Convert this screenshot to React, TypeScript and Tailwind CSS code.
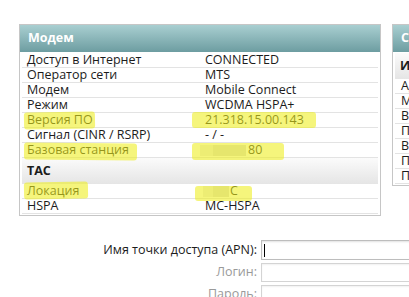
import React from 'react'

type Row = { label: string; value?: React.ReactNode }

const blurred = (a: number, b: number, shift: number) => (
  <span className="flex items-center" style={{ marginLeft: shift }}>
    <span className="h-[11px] bg-[#ececec]" style={{ width: a }} />
    <span className="h-[11px] bg-[#dcdcdc]" style={{ width: b }} />
  </span>
)

const modemTop: Row[] = [
  { label: 'Доступ в Интернет', value: 'CONNECTED' },
  { label: 'Оператор сети', value: 'MTS' },
  { label: 'Модем', value: 'Mobile Connect' },
  { label: 'Режим', value: 'WCDMA HSPA+' },
  { label: 'Версия ПО', value: '21.318.15.00.143' },
  { label: 'Сигнал (CINR / RSRP)', value: '- / -' },
  {
    label: 'Базовая станция',
    value: (
      <span className="flex items-center">
        {blurred(13, 33, -5)}
        <span className="ml-[2px]">80</span>
      </span>
    ),
  },
]

const modemBottom: Row[] = [
  {
    label: 'Локация',
    value: (
      <span className="flex items-center">
        {blurred(10, 16, -2)}
        <span className="ml-[1px]">C</span>
      </span>
    ),
  },
  { label: 'HSPA', value: 'MC-HSPA' },
]

const sideRows = ['Адрес', 'Маска', 'Время', 'Первичный DNS', 'Вторичный', 'Получено', 'Передано']

function InfoRow({ row }: { row: Row }) {
  return (
    <div className="flex h-[15px] items-center border-b border-[#e3e3e3] pl-[5px] text-[12.5px] leading-[14px] text-[#1c1c1c]">
      <span className="w-[178px] shrink-0 whitespace-nowrap">{row.label}</span>
      <span className="whitespace-nowrap">{row.value}</span>
    </div>
  )
}

function Section({ title }: { title: string }) {
  return (
    <div className="flex h-[26px] items-center bg-gradient-to-b from-[#fbfbfb] to-[#e5e5e5] pl-[5px] text-[12.5px] font-bold text-[#1c1c1c]">
      {title}
    </div>
  )
}

function Header({ title }: { title: string }) {
  return (
    <div className="flex h-[27px] items-center bg-gradient-to-b from-[#a9cfd1] to-[#6d9da1] px-[8px] text-[12.5px] font-bold whitespace-nowrap text-white">
      {title}
    </div>
  )
}

// маркер поверх скриншота
function Mark({ className }: { className: string }) {
  return <div className={'absolute rounded-[3px] bg-[rgba(238,238,30,0.58)] ' + className} />
}

export default function App() {
  return (
    <div className="relative h-[297px] w-[409px] overflow-hidden bg-white font-['Open_Sans',sans-serif]">
      <div className="flex items-start gap-[11px] pt-[24px] pl-[19px]">
        <div className="w-[362px] shrink-0 border border-[#c6c6c6]">
          <Header title="Модем" />
          <div className="px-[2px] pt-[1px] pb-[1px]">
            {modemTop.map((r) => (
              <InfoRow key={r.label} row={r} />
            ))}
            <Section title="TAC" />
            {modemBottom.map((r) => (
              <InfoRow key={r.label} row={r} />
            ))}
          </div>
        </div>
        <div className="w-[200px] shrink-0 border border-[#c6c6c6]">
          <Header title="Сеть" />
          <div className="px-[2px] pt-[1px] pb-[1px]">
            <Section title="Интерфейс" />
            {sideRows.map((r) => (
              <div key={r} className="flex h-[15px] items-center border-b border-[#e3e3e3] pl-[6px] text-[12.5px] leading-[14px] whitespace-nowrap text-[#1c1c1c]">
                {r}
              </div>
            ))}
          </div>
        </div>
      </div>

      <div className="mt-[24px] flex flex-col gap-[3px] text-[12.5px]">
        <div className="flex items-center">
          <span className="w-[257px] shrink-0 text-right whitespace-nowrap text-[#1c1c1c]">Имя точки доступа (APN):</span>
          <div className="ml-[4px] flex h-[20px] w-[200px] shrink-0 items-center border border-[#bdbdbd] pl-[2px] shadow-[inset_0_1px_2px_rgba(0,0,0,0.12)]">
            <span className="h-[13px] w-[1px] bg-black" />
          </div>
        </div>
        <div className="flex items-center">
          <span className="w-[257px] shrink-0 text-right text-[#9a9a9a]">Логин:</span>
          <div className="ml-[4px] h-[19px] w-[200px] shrink-0 border border-[#d4d4d4] shadow-[inset_0_1px_2px_rgba(0,0,0,0.06)]" />
        </div>
        <div className="flex items-center">
          <span className="w-[257px] shrink-0 text-right text-[#9a9a9a]">Пароль:</span>
          <div className="ml-[4px] h-[19px] w-[200px] shrink-0 border border-[#d4d4d4] shadow-[inset_0_1px_2px_rgba(0,0,0,0.06)]" />
        </div>
      </div>

      <Mark className="top-[112px] left-[24px] h-[17px] w-[71px] -rotate-1" />
      <Mark className="top-[112px] left-[192px] h-[16px] w-[124px]" />
      <Mark className="top-[143px] left-[24px] h-[17px] w-[113px] rotate-[0.5deg]" />
      <Mark className="top-[143px] left-[192px] h-[17px] w-[92px]" />
      <Mark className="top-[182px] left-[24px] h-[17px] w-[64px] -rotate-1" />
      <Mark className="top-[186px] left-[195px] h-[15px] w-[57px]" />
    </div>
  )
}
